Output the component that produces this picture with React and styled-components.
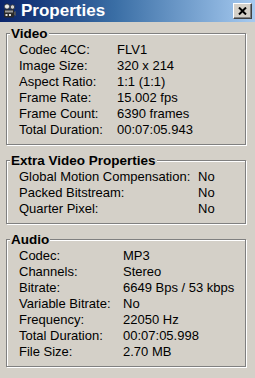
import React from 'react';
import styled, { createGlobalStyle } from 'styled-components';

const GlobalStyle = createGlobalStyle`
  html, body {
    margin: 0;
    padding: 0;
    background: #d4d0c8;
  }
  body {
    font-family: "Liberation Sans", Arial, sans-serif;
    font-size: 13px;
    color: #000;
  }
`;

const Window = styled.div`
  width: 255px;
  height: 378px;
  background: #d4d0c8;
  display: flex;
  flex-direction: column;
  overflow: hidden;
`;

const TitleBar = styled.div`
  height: 22px;
  display: flex;
  align-items: center;
  padding: 0 3px 0 3px;
  gap: 5px;
  background: linear-gradient(to right, #0a246a 0%, #3a6ea5 45%, #a6caf0 100%);
`;

const TitleText = styled.div`
  flex: 1;
  color: #fff;
  font-weight: bold;
  font-size: 17px;
  line-height: 20px;
`;

const CloseButton = styled.button`
  width: 19px;
  height: 16px;
  padding: 0;
  background: #d4d0c8;
  border: 1px solid;
  border-color: #fff #404040 #404040 #fff;
  box-shadow: inset -1px -1px 0 #808080;
  display: flex;
  align-items: center;
  justify-content: center;
`;

const Body = styled.div`
  display: flex;
  flex-direction: column;
  gap: 8px;
  padding: 4px 9px 0 6px;
`;

const Group = styled.fieldset`
  margin: 0;
  padding: 1px 0 6px 3px;
  border: 1px solid #808080;
  box-shadow: 1px 1px 0 #fff, inset 1px 1px 0 #fff;
  min-width: 0;
`;

const Legend = styled.legend`
  font-weight: bold;
  font-size: 13.5px;
  line-height: 15px;
  padding: 0 1px;
  background: #d4d0c8;
`;

const Rows = styled.div`
  display: grid;
  grid-template-columns: ${p => p.$labelWidth}px 1fr;
  padding-left: 9px;
  line-height: 16px;
  white-space: nowrap;
`;

const Label = styled.span``;
const Value = styled.span``;

function CameraIcon() {
  return (
    <svg width="13" height="16" viewBox="0 0 13 16">
      <circle cx="4" cy="3.5" r="2.6" fill="#e8e8e8" stroke="#303030" strokeWidth="0.8" />
      <circle cx="9.5" cy="4" r="2.2" fill="#d0d0d0" stroke="#303030" strokeWidth="0.8" />
      <rect x="1" y="6.5" width="10" height="8" rx="1" fill="#2a2a2a" />
      <rect x="2" y="7.5" width="8" height="2" fill="#9a9a9a" />
      <rect x="2.5" y="11" width="2" height="2" fill="#e0e0e0" />
      <rect x="6" y="11" width="2" height="2" fill="#e0e0e0" />
      <path d="M11 9 L12.8 8 L12.8 13 L11 12 Z" fill="#555" />
    </svg>
  );
}

function CloseGlyph() {
  return (
    <svg width="9" height="8" viewBox="0 0 9 8">
      <path d="M1 0.5 L8 7.5 M8 0.5 L1 7.5" stroke="#000" strokeWidth="2" />
    </svg>
  );
}

function PropertyGroup(props) {
  return (
    <Group>
      <Legend>{props.title}</Legend>
      <Rows $labelWidth={props.labelWidth}>
        {props.rows.map(([label, value]) => (
          <React.Fragment key={label}>
            <Label>{label}</Label>
            <Value>{value}</Value>
          </React.Fragment>
        ))}
      </Rows>
    </Group>
  );
}

const video = [
  ['Codec 4CC:', 'FLV1'],
  ['Image Size:', '320 x 214'],
  ['Aspect Ratio:', '1:1 (1:1)'],
  ['Frame Rate:', '15.002 fps'],
  ['Frame Count:', '6390 frames'],
  ['Total Duration:', '00:07:05.943'],
];

const extra = [
  ['Global Motion Compensation:', 'No'],
  ['Packed Bitstream:', 'No'],
  ['Quarter Pixel:', 'No'],
];

const audio = [
  ['Codec:', 'MP3'],
  ['Channels:', 'Stereo'],
  ['Bitrate:', '6649 Bps / 53 kbps'],
  ['Variable Bitrate:', 'No'],
  ['Frequency:', '22050 Hz'],
  ['Total Duration:', '00:07:05.998'],
  ['File Size:', '2.70 MB'],
];

export default function App() {
  return (
    <Window>
      <GlobalStyle />
      <TitleBar>
        <CameraIcon />
        <TitleText>Properties</TitleText>
        <CloseButton><CloseGlyph /></CloseButton>
      </TitleBar>
      <Body>
        <PropertyGroup title="Video" labelWidth={98} rows={video} />
        <PropertyGroup title="Extra Video Properties" labelWidth={179} rows={extra} />
        <PropertyGroup title="Audio" labelWidth={104} rows={audio} />
      </Body>
    </Window>
  );
}
